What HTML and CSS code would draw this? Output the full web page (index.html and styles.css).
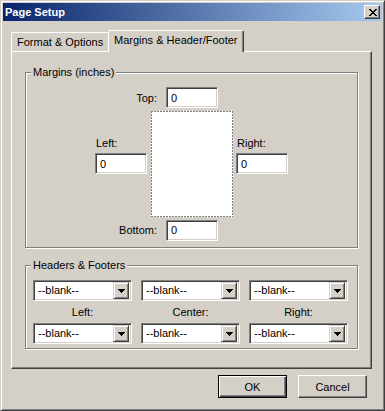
FILE: index.html
```html
<!DOCTYPE html>
<html lang="en">

<head>
    <meta charset="UTF-8">
    <meta name="viewport" content="width=device-width, initial-scale=1.0">
    <title>Page Setup</title>
    <link rel="stylesheet" href="styles.css">
</head>

<body>
    <div class="window">
        <div class="titlebar">
            <span class="title">Page Setup</span>
            <button class="close" type="button">
                <svg width="8" height="7" viewBox="0 0 8 7">
                    <path d="M0 0h2v1H0z M6 0h2v1H6z M1 1h2v1H1z M5 1h2v1H5z M2 2h4v1H2z M3 3h2v1H3z M2 4h4v1H2z M1 5h2v1H1z M5 5h2v1H5z M0 6h2v1H0z M6 6h2v1H6z" fill="#000"/>
                </svg>
            </button>
        </div>

        <div class="tabs">
            <div class="tab">Format &amp; Options</div>
            <div class="tab active">Margins &amp; Header/Footer</div>
        </div>

        <div class="panel">
            <div class="group">
                <div class="group-title">Margins (inches)</div>
                <div class="margin-grid">
                    <div class="row-top">
                        <label class="row-label">Top:</label>
                        <input class="field" type="text" value="0">
                    </div>
                    <div class="side">
                        <label>Left:</label>
                        <input class="field" type="text" value="0">
                    </div>
                    <div class="paper"></div>
                    <div class="side right">
                        <label>Right:</label>
                        <input class="field" type="text" value="0">
                    </div>
                    <div class="row-bottom">
                        <label class="row-label">Bottom:</label>
                        <input class="field" type="text" value="0">
                    </div>
                </div>
            </div>

            <div class="group hf">
                <div class="group-title">Headers &amp; Footers</div>
                <div class="hf-grid">
                    <div class="combo"><span>--blank--</span><span class="drop"><svg width="7" height="4" viewBox="0 0 7 4"><path d="M0 0h7v1H0z M1 1h5v1H1z M2 2h3v1H2z M3 3h1v1H3z" fill="#000"/></svg></span></div>
                    <div class="combo"><span>--blank--</span><span class="drop"><svg width="7" height="4" viewBox="0 0 7 4"><path d="M0 0h7v1H0z M1 1h5v1H1z M2 2h3v1H2z M3 3h1v1H3z" fill="#000"/></svg></span></div>
                    <div class="combo"><span>--blank--</span><span class="drop"><svg width="7" height="4" viewBox="0 0 7 4"><path d="M0 0h7v1H0z M1 1h5v1H1z M2 2h3v1H2z M3 3h1v1H3z" fill="#000"/></svg></span></div>
                    <div class="hf-label">Left:</div>
                    <div class="hf-label">Center:</div>
                    <div class="hf-label">Right:</div>
                    <div class="combo"><span>--blank--</span><span class="drop"><svg width="7" height="4" viewBox="0 0 7 4"><path d="M0 0h7v1H0z M1 1h5v1H1z M2 2h3v1H2z M3 3h1v1H3z" fill="#000"/></svg></span></div>
                    <div class="combo"><span>--blank--</span><span class="drop"><svg width="7" height="4" viewBox="0 0 7 4"><path d="M0 0h7v1H0z M1 1h5v1H1z M2 2h3v1H2z M3 3h1v1H3z" fill="#000"/></svg></span></div>
                    <div class="combo"><span>--blank--</span><span class="drop"><svg width="7" height="4" viewBox="0 0 7 4"><path d="M0 0h7v1H0z M1 1h5v1H1z M2 2h3v1H2z M3 3h1v1H3z" fill="#000"/></svg></span></div>
                </div>
            </div>
        </div>

        <div class="buttons">
            <button class="btn default" type="button">OK</button>
            <button class="btn" type="button">Cancel</button>
        </div>
    </div>
</body>

</html>
```

FILE: styles.css
```css
* {
    box-sizing: border-box;
}

body {
    margin: 0;
    background-color: #d4d0c8;
    font-family: 'Liberation Sans', Arial, sans-serif;
    font-size: 11px;
    color: #000;
}

.window {
    width: 385px;
    height: 411px;
    padding: 2px;
    border: 1px solid;
    border-color: #d4d0c8 #404040 #404040 #d4d0c8;
    box-shadow: inset 1px 1px #fff, inset -1px -1px #808080;
    background-color: #d4d0c8;
}

.titlebar {
    height: 18px;
    display: flex;
    align-items: center;
    justify-content: space-between;
    padding: 0 2px;
    background: linear-gradient(to right, #0a246a, #a6caf0);
}

.title {
    color: #fff;
    font-weight: bold;
    font-size: 11px;
    line-height: 18px;
}

.close {
    width: 16px;
    height: 14px;
    padding: 0 0 0 1px;
    display: flex;
    align-items: center;
    justify-content: center;
    background-color: #d4d0c8;
    border: 1px solid;
    border-color: #fff #404040 #404040 #fff;
    box-shadow: inset -1px -1px #808080;
}

.close svg {
    display: block;
}

/* tab strip */
.tabs {
    display: flex;
    align-items: flex-end;
    margin: 9px 0 0 8px;
    height: 21px;
}

.tab {
    height: 19px;
    padding-left: 5px;
    line-height: 18px;
    border: 1px solid;
    border-bottom: none;
    border-color: #fff #404040 #fff #fff;
    border-radius: 2px 2px 0 0;
    white-space: nowrap;
}

.tab:first-child {
    width: 99px;
}

.tab.active {
    position: relative;
    z-index: 1;
    width: 136px;
    height: 22px;
    margin: 0 0 -1px -2px;
    line-height: 19px;
    background-color: #d4d0c8;
    box-shadow: inset -1px 0 #808080;
}

.panel {
    width: 361px;
    margin-left: 8px;
    padding: 20px 13px 19px;
    border: 1px solid;
    border-color: #fff #404040 #404040 #fff;
    box-shadow: inset -1px -1px #808080;
}

/* group boxes */
.group {
    border: 1px solid #808080;
    box-shadow: inset 1px 1px #fff, 1px 1px #fff;
    padding-bottom: 6px;
}

.group.hf {
    margin-top: 17px;
    padding-bottom: 4px;
}

.group-title {
    width: fit-content;
    margin: -8px 0 0 5px;
    padding: 0 2px;
    line-height: 14px;
    background-color: #d4d0c8;
}

.field {
    width: 52px;
    height: 21px;
    padding: 0 0 0 4px;
    font-family: 'Liberation Sans', Arial, sans-serif;
    font-size: 11px;
    color: #000;
    background-color: #fff;
    border: 1px solid;
    border-color: #808080 #fff #fff #808080;
    box-shadow: inset 1px 1px #404040, inset -1px -1px #d4d0c8;
    outline: none;
}

/* margins */
.margin-grid {
    display: grid;
    grid-template-columns: 52px 82px 52px;
    grid-template-rows: 21px 106px 21px;
    column-gap: 4px;
    row-gap: 3px;
    margin-top: 8px;
    padding-left: 69px;
}

.row-top,
.row-bottom {
    grid-column: 1 / -1;
    display: flex;
    align-items: center;
}

.row-bottom {
    margin-top: -1px;
}

.row-label {
    width: 62px;
    margin-right: 9px;
    text-align: right;
}

.side {
    padding-top: 26px;
}

.side label {
    display: block;
    line-height: 13px;
    margin-bottom: 3px;
    padding-left: 1px;
}

.side.right {
    margin-left: -1px;
}

.paper {
    background:
        repeating-linear-gradient(90deg, #808080 0 2px, transparent 2px 3px) top / 100% 1px no-repeat,
        repeating-linear-gradient(90deg, #808080 0 2px, transparent 2px 3px) bottom / 100% 1px no-repeat,
        repeating-linear-gradient(180deg, #808080 0 2px, transparent 2px 3px) left / 1px 100% no-repeat,
        repeating-linear-gradient(180deg, #808080 0 2px, transparent 2px 3px) right / 1px 100% no-repeat,
        #fff;
}

/* headers & footers */
.hf-grid {
    display: grid;
    grid-template-columns: repeat(3, 99px);
    grid-template-rows: 21px 22px 21px;
    column-gap: 9px;
    margin-top: 8px;
    padding-left: 7px;
}

.hf-label {
    text-align: center;
    line-height: 22px;
}

.combo {
    display: flex;
    align-items: center;
    justify-content: space-between;
    padding: 2px 2px 2px 4px;
    background-color: #fff;
    border: 1px solid;
    border-color: #808080 #fff #fff #808080;
    box-shadow: inset 1px 1px #404040, inset -1px -1px #d4d0c8;
    line-height: 17px;
}

.drop {
    width: 16px;
    height: 17px;
    display: flex;
    align-items: center;
    justify-content: center;
    background-color: #d4d0c8;
    border: 1px solid;
    border-color: #d4d0c8 #404040 #404040 #d4d0c8;
    box-shadow: inset 1px 1px #fff, inset -1px -1px #808080;
}

.drop svg {
    display: block;
}

/* dialog buttons */
.buttons {
    display: flex;
    justify-content: flex-end;
    gap: 11px;
    margin-top: 6px;
    padding-right: 15px;
}

.btn {
    width: 69px;
    height: 23px;
    padding: 0;
    font-family: 'Liberation Sans', Arial, sans-serif;
    font-size: 11px;
    color: #000;
    background-color: #d4d0c8;
    border: 1px solid;
    border-color: #fff #404040 #404040 #fff;
    box-shadow: inset -1px -1px #808080;
}

.btn.default {
    border-color: #000;
    box-shadow: inset 1px 1px #fff, inset -1px -1px #404040, inset -2px -2px #808080;
}
```
